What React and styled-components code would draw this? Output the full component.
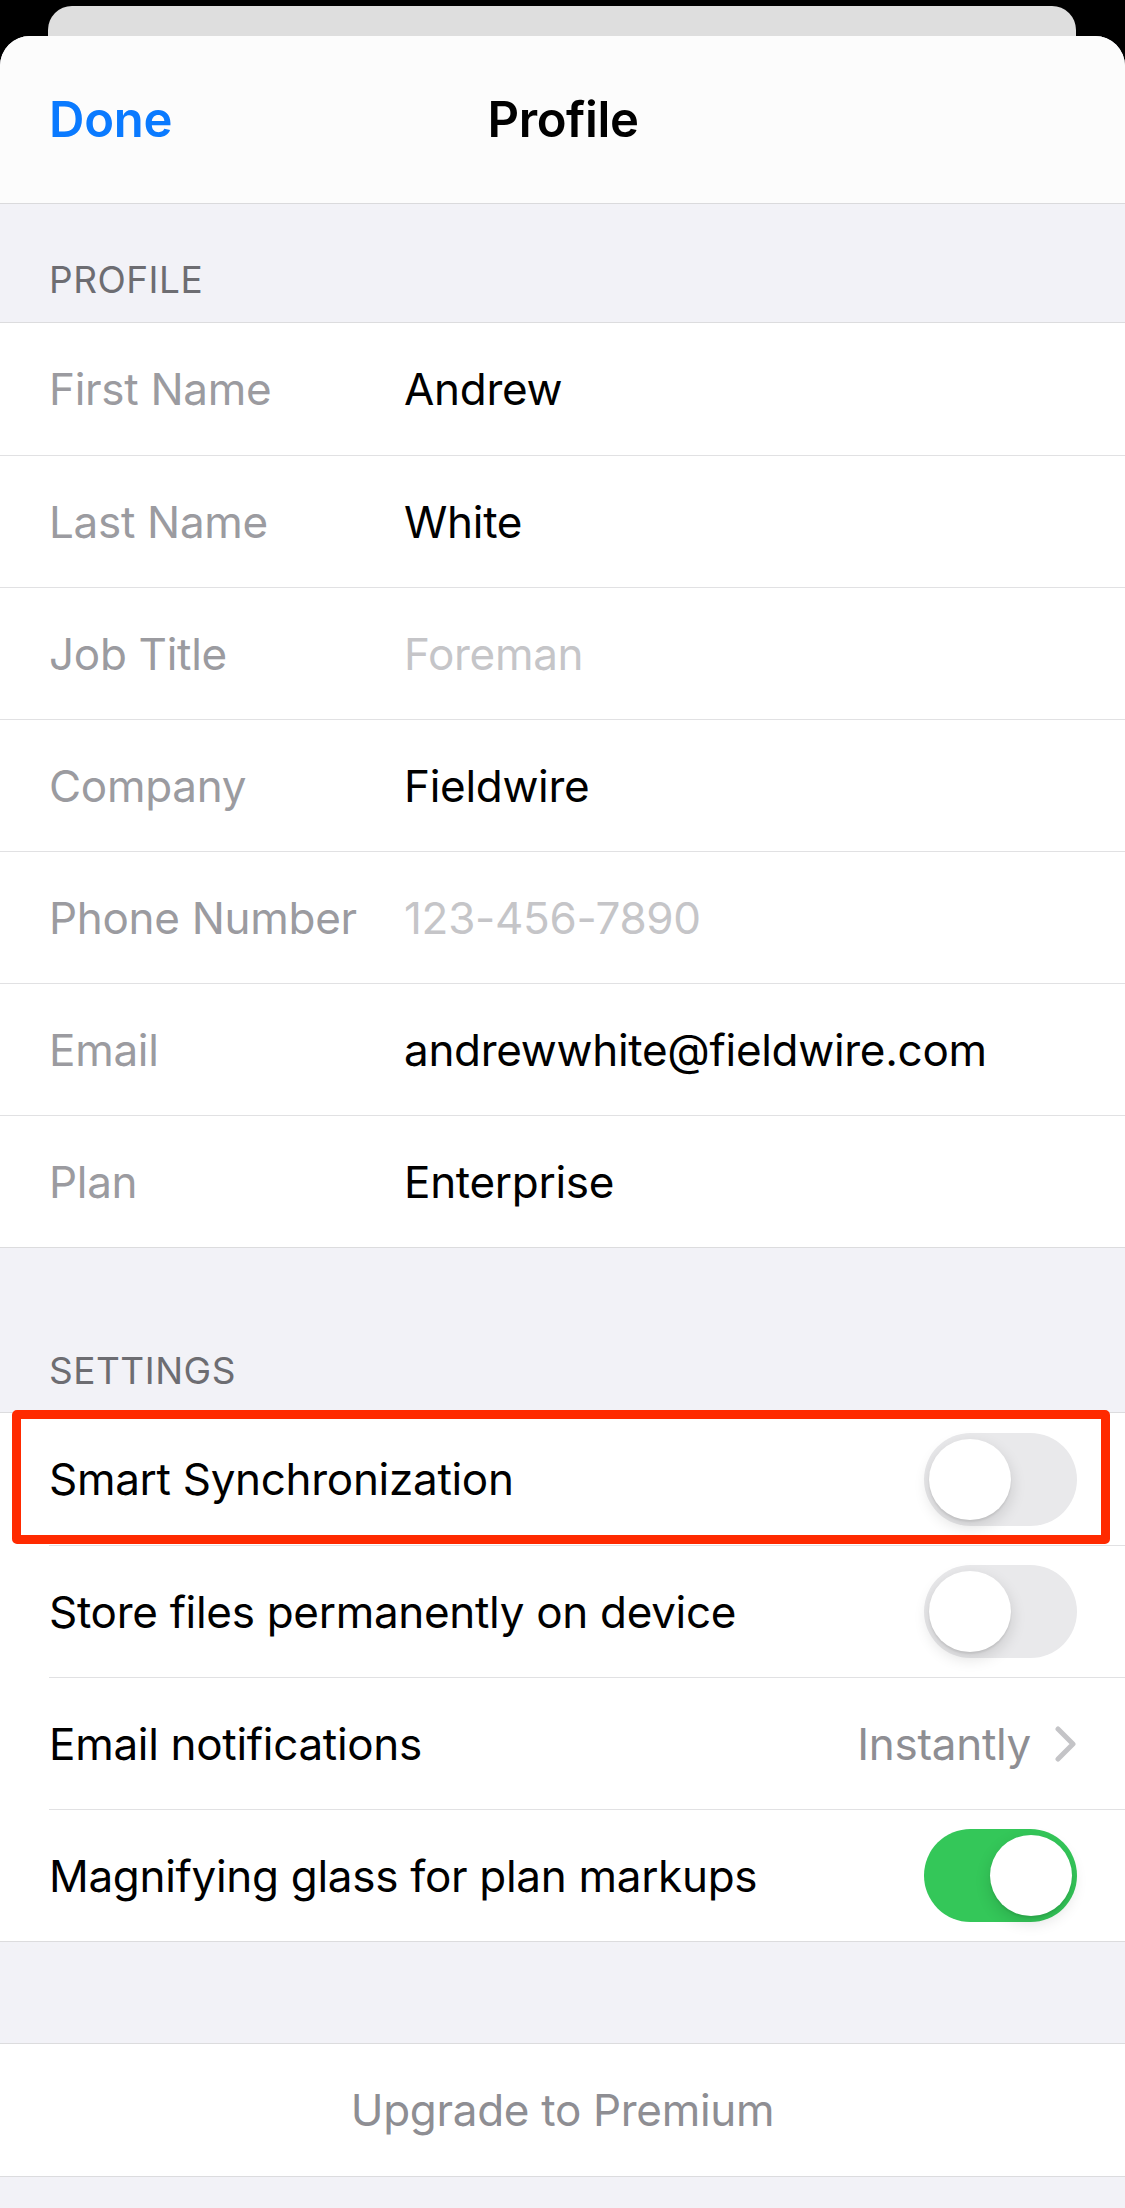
import React from "react";
import styled, { createGlobalStyle } from "styled-components";

const Global = createGlobalStyle`
  html, body { margin: 0; padding: 0; background: #000; }
  body { font-family: Inter, "Noto Sans", "Liberation Sans", sans-serif; -webkit-font-smoothing: antialiased; }
  * { box-sizing: border-box; }
`;

const Screen = styled.div`
  width: 1125px;
  height: 2208px;
  background: #000;
  display: flex;
  flex-direction: column;
  padding-top: 6px;
  overflow: hidden;
`;

const BehindCard = styled.div`
  height: 30px;
  margin: 0 49px 0 48px;
  background: #dedede;
  border-radius: 24px 24px 0 0;
`;

const Sheet = styled.div`
  flex: 1;
  background: #f2f2f7;
  border-radius: 30px 30px 0 0;
  overflow: hidden;
  display: flex;
  flex-direction: column;
`;

const NavBar = styled.header`
  height: 168px;
  flex: none;
  background: #fcfcfc;
  border-bottom: 1px solid #dadadc;
  display: grid;
  grid-template-columns: 1fr auto 1fr;
  align-items: center;
  padding: 0 48px 0 49px;
`;

const NavButton = styled.span`
  font-size: 49px;
  font-weight: 600;
  color: #0a7aff;
  letter-spacing: -0.2px;
`;

const NavTitle = styled.h1`
  margin: 0;
  font-size: 49px;
  font-weight: 600;
  color: #000;
  letter-spacing: -0.4px;
`;

const SectionHeader = styled.div`
  height: ${(p) => p.$h}px;
  flex: none;
  display: flex;
  align-items: flex-end;
  padding: 0 49px ${(p) => p.$pb}px;
  font-size: 37px;
  line-height: 44px;
  color: #6d6d72;
  letter-spacing: 0.5px;
`;

const Group = styled.section`
  flex: none;
  background: #fff;
  border-top: 1px solid #dcdcde;
  border-bottom: 1px solid #dcdcde;
`;

const Row = styled.div`
  position: relative;
  height: 132px;
  display: flex;
  padding-left: 49px;
  ${(p) => (!p.$first && p.$fullSep ? "border-top: 1px solid #e1e1e3;" : "")}
`;

const RowBody = styled.div`
  flex: 1;
  display: flex;
  align-items: center;
  padding-right: 48px;
  ${(p) => (!p.$first && !p.$fullSep ? "border-top: 1px solid #e1e1e3;" : "")}
`;

const bodyText = `
  font-size: 44px;
  letter-spacing: -0.3px;
`;

const FieldLabel = styled.span`
  width: 355px;
  flex: none;
  ${bodyText}
  color: #9b9ba0;
`;

const FieldValue = styled.span`
  ${bodyText}
  color: ${(p) => (p.$placeholder ? "#c5c5c8" : "#000")};
`;

const SettingLabel = styled.span`
  flex: 1;
  ${bodyText}
  color: #000;
`;

const Detail = styled.span`
  display: flex;
  align-items: center;
  gap: 24px;
  ${bodyText}
  color: #8e8e93;
`;

const Track = styled.div`
  width: 153px;
  height: 93px;
  flex: none;
  border-radius: 47px;
  padding: 6px 5px;
  display: flex;
  justify-content: ${(p) => (p.$on ? "flex-end" : "flex-start")};
  background: ${(p) => (p.$on ? "#34c759" : "#e9e9eb")};
`;

const Knob = styled.div`
  width: 82px;
  height: 81px;
  border-radius: 50%;
  background: #fff;
  box-shadow: 0 6px 16px rgba(0, 0, 0, 0.14), 0 2px 2px rgba(0, 0, 0, 0.08);
`;

const Highlight = styled.div`
  position: absolute;
  left: 12px;
  right: 15px;
  top: -3px;
  bottom: 1px;
  border: 9px solid #ff2a00;
  border-radius: 5px;
  pointer-events: none;
`;

const Spacer = styled.div`
  height: ${(p) => p.$h}px;
  flex: none;
`;

const ActionRow = styled.div`
  height: 132px;
  display: flex;
  align-items: center;
  justify-content: center;
  ${bodyText}
  color: #8e8e93;
`;

const Toggle = ({ on }) => (
  <Track $on={on}>
    <Knob />
  </Track>
);

const Chevron = () => (
  <svg width="22" height="36" viewBox="0 0 22 36" fill="none">
    <path d="M3 3 L18 18 L3 33" stroke="#c4c4c7" strokeWidth="5" strokeLinecap="round" strokeLinejoin="round" />
  </svg>
);

const profile = [
  ["First Name", "Andrew"],
  ["Last Name", "White"],
  ["Job Title", "Foreman", true],
  ["Company", "Fieldwire"],
  ["Phone Number", "123-456-7890", true],
  ["Email", "andrewwhite@fieldwire.com"],
  ["Plan", "Enterprise"],
];

export default function App() {
  return (
    <>
      <Global />
      <Screen>
        <BehindCard />
        <Sheet>
          <NavBar>
            <NavButton>Done</NavButton>
            <NavTitle>Profile</NavTitle>
            <span />
          </NavBar>
          <SectionHeader $h={118} $pb={20}>PROFILE</SectionHeader>
          <Group>
            {profile.map(([label, value, ph], i) => (
              <Row key={label} $first={i === 0} $fullSep>
                <RowBody $first={i === 0} $fullSep>
                  <FieldLabel>{label}</FieldLabel>
                  <FieldValue $placeholder={ph}>{value}</FieldValue>
                </RowBody>
              </Row>
            ))}
          </Group>
          <SectionHeader $h={164} $pb={19}>SETTINGS</SectionHeader>
          <Group>
            <Row $first>
              <RowBody $first>
                <SettingLabel>Smart Synchronization</SettingLabel>
                <Toggle on={false} />
              </RowBody>
              <Highlight />
            </Row>
            <Row>
              <RowBody>
                <SettingLabel>Store files permanently on device</SettingLabel>
                <Toggle on={false} />
              </RowBody>
            </Row>
            <Row>
              <RowBody>
                <SettingLabel>Email notifications</SettingLabel>
                <Detail>
                  Instantly
                  <Chevron />
                </Detail>
              </RowBody>
            </Row>
            <Row>
              <RowBody>
                <SettingLabel>Magnifying glass for plan markups</SettingLabel>
                <Toggle on />
              </RowBody>
            </Row>
          </Group>
          <Spacer $h={101} />
          <Group>
            <ActionRow>Upgrade to Premium</ActionRow>
          </Group>
        </Sheet>
      </Screen>
    </>
  );
}
